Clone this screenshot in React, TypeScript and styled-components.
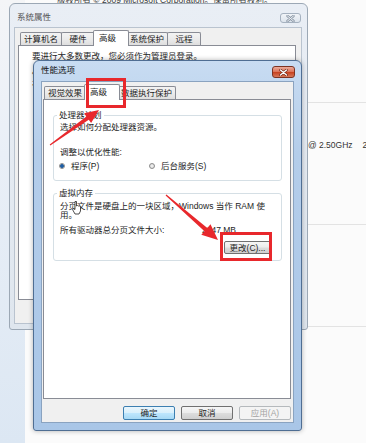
import React from 'react';
import styled, { createGlobalStyle, css } from 'styled-components';

const FONT = `"Liberation Sans", "Noto Sans CJK SC", sans-serif`;

const GlobalStyle = createGlobalStyle`
  html, body { margin: 0; padding: 0; background: #fafafa; }
  body { width: 366px; height: 443px; overflow: hidden; font-family: ${FONT}; }
  * { box-sizing: border-box; }
`;

const Desktop = styled.div`
  position: relative;
  width: 366px;
  height: 443px;
  overflow: hidden;
  display: flex;
  background: #fbfbfb;
  font-family: ${FONT};
  color: #1e1e1e;
`;

const NavPane = styled.div`
  width: 25px;
  flex: none;
  background: linear-gradient(to bottom, #f4f5f7 0%, #e9eff7 35%, #dce7f3 100%);
`;

const MainPane = styled.div`
  flex: 1;
  display: flex;
  flex-direction: column;
  background: #fbfbfb;
`;

const Copyright = styled.div`
  margin-top: -5px;
  padding-left: 32px;
  font-size: 8.5px;
  line-height: 10px;
  color: #3a3a3a;
  white-space: nowrap;
`;

const InfoSection = styled.div<{ $h: number }>`
  height: ${(p) => p.$h}px;
  flex: none;
  border-bottom: 1px solid #e3e3e3;
  display: flex;
  flex-direction: column;
`;

const InfoRow = styled.div<{ $top: number; $left: number }>`
  margin-top: ${(p) => p.$top}px;
  padding-left: ${(p) => p.$left}px;
  display: flex;
  gap: 10px;
  font-size: 8.5px;
  line-height: 10px;
  color: #333;
  white-space: nowrap;
`;

const WindowFrame = styled.div<{ $x: number; $y: number; $w: number; $h: number; $active?: boolean }>`
  position: absolute;
  left: ${(p) => p.$x}px;
  top: ${(p) => p.$y}px;
  width: ${(p) => p.$w}px;
  height: ${(p) => p.$h}px;
  display: flex;
  flex-direction: column;
  border-radius: 6px 6px 3px 3px;
  ${(p) =>
    p.$active
      ? css`
          border: 1px solid #4f6e93;
          background: linear-gradient(to bottom, #c8dcf2 0%, #b4cdea 25%, #a9c6e7 100%);
          padding: 0 7px 7px 7px;
          box-shadow: 0 0 5px rgba(0, 0, 0, 0.3);
        `
      : css`
          border: 1px solid #9ca8b5;
          background: linear-gradient(to bottom, #e9eef5 0%, #dfe6ee 100%);
          padding: 0 5px 5px 4px;
        `}
`;

const TitleBar = styled.div<{ $h: number }>`
  height: ${(p) => p.$h}px;
  flex: none;
  display: flex;
  align-items: flex-start;
  justify-content: space-between;
`;

const TitleText = styled.span<{ $active?: boolean; $top: number; $left: number }>`
  margin-top: ${(p) => p.$top}px;
  margin-left: ${(p) => p.$left}px;
  font-size: 8.5px;
  line-height: 10px;
  color: ${(p) => (p.$active ? '#111' : '#555')};
`;

const CloseButton = styled.div<{ $active?: boolean; $top: number; $right: number }>`
  margin-top: ${(p) => p.$top}px;
  margin-right: ${(p) => p.$right}px;
  border-radius: 3px;
  display: flex;
  align-items: center;
  justify-content: center;
  ${(p) =>
    p.$active
      ? css`
          width: 23px;
          height: 12px;
          border: 1px solid #7d3322;
          background: linear-gradient(to bottom, #eaab9b 0%, #dc7257 48%, #c6401d 52%, #d6785a 100%);
        `
      : css`
          width: 21px;
          height: 10px;
          border: 1px solid #a5b1bf;
          background: linear-gradient(to bottom, #f1f4f8 0%, #dde4ec 100%);
        `}
`;

const Client = styled.div<{ $active?: boolean; $pad: string }>`
  flex: 1;
  display: flex;
  flex-direction: column;
  background: #f0f0f0;
  border: 1px solid ${(p) => (p.$active ? '#8aa3c0' : '#b9c3cf')};
  padding: ${(p) => p.$pad};
  min-height: 0;
`;

const TabStrip = styled.div<{ $indent: number }>`
  height: 15px;
  flex: none;
  display: flex;
  align-items: flex-end;
  padding-left: ${(p) => p.$indent}px;
  position: relative;
  z-index: 1;
`;

const Tab = styled.div<{ $selected?: boolean }>`
  font-size: 8.5px;
  line-height: 10px;
  white-space: nowrap;
  display: flex;
  align-items: center;
  justify-content: center;
  border: 1px solid #898c95;
  border-bottom: none;
  border-radius: 2px 2px 0 0;
  ${(p) =>
    p.$selected
      ? css`
          height: 16px;
          margin: 0 -2px -1px -2px;
          padding: 0 12px 2px 5px;
          background: #fff;
          position: relative;
          z-index: 2;
        `
      : css`
          height: 13px;
          min-width: 34px;
          margin-left: -1px;
          padding: 0 3px;
          background: linear-gradient(to bottom, #f3f3f3 0%, #ebebeb 50%, #dedede 100%);
        `}
`;

const TabPanel = styled.div<{ $pad: string }>`
  flex: 1;
  min-height: 0;
  background: #fff;
  border: 1px solid #898c95;
  padding: ${(p) => p.$pad};
  display: flex;
  flex-direction: column;
  overflow: hidden;
`;

const ButtonRow = styled.div<{ $top: number; $bottom: number; $right?: number }>`
  flex: none;
  display: flex;
  justify-content: flex-end;
  gap: 6px;
  margin-top: ${(p) => p.$top}px;
  margin-bottom: ${(p) => p.$bottom}px;
  margin-right: ${(p) => p.$right ?? 0}px;
`;

type Variant = 'default' | 'normal' | 'disabled';

const WinButton = styled.div<{ $variant?: Variant; $w: number; $h?: number }>`
  width: ${(p) => p.$w}px;
  height: ${(p) => p.$h ?? 14}px;
  flex: none;
  display: flex;
  align-items: center;
  justify-content: center;
  font-size: 8.5px;
  line-height: 10px;
  border-radius: 2px;
  white-space: nowrap;
  color: #1e1e1e;
  border: 1px solid #707070;
  background: linear-gradient(to bottom, #f6f6f6 0%, #ececec 48%, #dddddd 52%, #cfcfcf 100%);
  ${(p) =>
    p.$variant === 'default' &&
    css`
      border-color: #3c7fb1;
      background: linear-gradient(to bottom, #eaf6fd 0%, #d9f0fc 48%, #bee6fd 52%, #a7d9f5 100%);
    `}
  ${(p) =>
    p.$variant === 'disabled' &&
    css`
      border-color: #b5b9bc;
      background: #f4f4f4;
      color: #a3a3a3;
    `}
`;

const GroupBox = styled.fieldset<{ $top: number; $bottom: number }>`
  margin: ${(p) => p.$top}px 8px 0 9px;
  padding: 0 6px ${(p) => p.$bottom}px 6px;
  border: 1px solid #d5dfe5;
  border-radius: 3px;
  min-width: 0;
  flex: none;
`;

const GroupLegend = styled.legend`
  padding: 0 2px;
  margin-left: -3px;
  font-size: 8.5px;
  line-height: 10px;
  color: #1e1e1e;
`;

const Text = styled.div<{ $top?: number; $lh?: number }>`
  margin-top: ${(p) => p.$top ?? 0}px;
  font-size: 8.5px;
  line-height: ${(p) => p.$lh ?? 10}px;
  color: #1e1e1e;
  white-space: nowrap;
`;

const RadioRow = styled.div`
  margin-top: 4px;
  display: grid;
  grid-template-columns: 90px auto;
  height: 10px;
`;

const RadioItem = styled.label`
  display: flex;
  align-items: center;
  gap: 6px;
  font-size: 8.5px;
  line-height: 10px;
  margin-left: -1px;
`;

const RadioDot = styled.span<{ $checked?: boolean }>`
  width: 6px;
  height: 6px;
  border-radius: 50%;
  flex: none;
  border: 1px solid #8b8b8b;
  background: ${(p) =>
    p.$checked
      ? 'radial-gradient(circle, #1f5fa6 0 1.6px, #9cc3ea 2px, #e9f1fa 100%)'
      : 'radial-gradient(circle, #f4f4f4 0, #d6d6d6 100%)'};
`;

const ValueRow = styled.div`
  margin-top: 5px;
  display: grid;
  grid-template-columns: 142px auto;
  font-size: 8.5px;
  line-height: 10px;
  white-space: nowrap;
`;

const ChangeRow = styled.div`
  margin-top: 6px;
  display: flex;
  justify-content: flex-end;
  padding-right: 4px;
`;

const Overlay = styled.svg`
  position: absolute;
  left: 0;
  top: 0;
  width: 366px;
  height: 443px;
  pointer-events: none;
  z-index: 10;
`;

type Pt = [number, number];

function arrowPoints(tail: Pt, tip: Pt, headLen: number, headHalf: number, tailHalf: number, neckHalf: number): string {
  const dx = tip[0] - tail[0];
  const dy = tip[1] - tail[1];
  const len = Math.hypot(dx, dy);
  const ux = dx / len;
  const uy = dy / len;
  const nx = -uy;
  const ny = ux;
  const bx = tip[0] - ux * headLen;
  const by = tip[1] - uy * headLen;
  const pts: Pt[] = [
    [tail[0] + nx * tailHalf, tail[1] + ny * tailHalf],
    [bx + nx * neckHalf, by + ny * neckHalf],
    [bx + nx * headHalf, by + ny * headHalf],
    tip,
    [bx - nx * headHalf, by - ny * headHalf],
    [bx - nx * neckHalf, by - ny * neckHalf],
    [tail[0] - nx * tailHalf, tail[1] - ny * tailHalf],
  ];
  return pts.map((p) => `${p[0].toFixed(1)},${p[1].toFixed(1)}`).join(' ');
}

const CloseGlyph: React.FC<{ active?: boolean }> = ({ active }) => (
  <svg width="9" height="7" viewBox="0 0 9 7">
    {active ? (
      <>
        <path d="M1.5 1 L7.5 6 M7.5 1 L1.5 6" stroke="#6b2414" strokeWidth="2.6" strokeLinecap="round" />
        <path d="M1.5 1 L7.5 6 M7.5 1 L1.5 6" stroke="#fff" strokeWidth="1.4" strokeLinecap="round" />
      </>
    ) : (
      <>
        <path d="M1.5 1 L7.5 6 M7.5 1 L1.5 6" stroke="#8b97a6" strokeWidth="2.4" strokeLinecap="round" />
        <path d="M1.5 1 L7.5 6 M7.5 1 L1.5 6" stroke="#eef2f6" strokeWidth="1" strokeLinecap="round" />
      </>
    )}
  </svg>
);

const RED = '#e8282c';

export default function App() {
  return (
    <>
      <GlobalStyle />
      <Desktop>
        <NavPane />
        <MainPane>
          <Copyright>版权所有 © 2009 Microsoft Corporation。保留所有权利。</Copyright>
          <InfoSection $h={98} />
          <InfoSection $h={122}>
            <InfoRow $top={37} $left={283}>
              <span>@ 2.50GHz</span>
              <span>2.50 GHz</span>
            </InfoRow>
          </InfoSection>
          <InfoSection $h={102} />
        </MainPane>

        {/* 系统属性 (inactive, behind) */}
        <WindowFrame $x={9} $y={3} $w={299} $h={327}>
          <TitleBar $h={23}>
            <TitleText $top={8} $left={3}>系统属性</TitleText>
            <CloseButton $top={9} $right={1}>
              <CloseGlyph />
            </CloseButton>
          </TitleBar>
          <Client $pad="2px 5px 0 3px">
            <TabStrip $indent={3}>
              <Tab>计算机名</Tab>
              <Tab>硬件</Tab>
              <Tab $selected>高级</Tab>
              <Tab>系统保护</Tab>
              <Tab>远程</Tab>
            </TabStrip>
            <TabPanel $pad="5px 8px 0 13px">
              <Text>要进行大多数更改，您必须作为管理员登录。</Text>
              <Text $top={8}>性能</Text>
              <Text>视觉效果，处理器计划，内存使用，以及虚拟内存</Text>
            </TabPanel>
            <ButtonRow $top={6} $bottom={3}>
              <WinButton $w={52} $variant="default">确定</WinButton>
              <WinButton $w={52}>取消</WinButton>
              <WinButton $w={52} $variant="disabled">应用(A)</WinButton>
            </ButtonRow>
          </Client>
        </WindowFrame>

        {/* 性能选项 (active) */}
        <WindowFrame $x={33} $y={60} $w={269} $h={371} $active>
          <TitleBar $h={20}>
            <TitleText $active $top={4} $left={0}>性能选项</TitleText>
            <CloseButton $active $top={5} $right={-1}>
              <CloseGlyph active />
            </CloseButton>
          </TitleBar>
          <Client $active $pad="2px 2px 1px 1px">
            <TabStrip $indent={2}>
              <Tab>视觉效果</Tab>
              <Tab $selected>高级</Tab>
              <Tab>数据执行保护</Tab>
            </TabStrip>
            <TabPanel $pad="10px 0 0 0">
              <GroupBox $top={0} $bottom={9}>
                <GroupLegend>处理器计划</GroupLegend>
                <Text $top={2}>选择如何分配处理器资源。</Text>
                <Text $top={15}>调整以优化性能:</Text>
                <RadioRow>
                  <RadioItem>
                    <RadioDot $checked />
                    程序(P)
                  </RadioItem>
                  <RadioItem>
                    <RadioDot />
                    后台服务(S)
                  </RadioItem>
                </RadioRow>
              </GroupBox>
              <GroupBox $top={7} $bottom={6}>
                <GroupLegend>虚拟内存</GroupLegend>
                <Text $top={4} $lh={9}>
                  分页文件是硬盘上的一块区域，Windows 当作 RAM 使
                  <br />
                  用。
                </Text>
                <ValueRow>
                  <span>所有驱动器总分页文件大小:</span>
                  <span>2047 MB</span>
                </ValueRow>
                <ChangeRow>
                  <WinButton $w={47} $h={13}>更改(C)...</WinButton>
                </ChangeRow>
              </GroupBox>
            </TabPanel>
            <ButtonRow $top={7} $bottom={1} $right={0}>
              <WinButton $w={52} $variant="default">确定</WinButton>
              <WinButton $w={52}>取消</WinButton>
              <WinButton $w={52} $variant="disabled">应用(A)</WinButton>
            </ButtonRow>
          </Client>
        </WindowFrame>

        <Overlay viewBox="0 0 366 443">
          <rect x="87.5" y="79.5" width="37" height="27" fill="none" stroke={RED} strokeWidth="3" />
          <rect x="221.5" y="233.5" width="49" height="26" fill="none" stroke={RED} strokeWidth="3" />
          <polygon points={arrowPoints([50, 145], [99, 110], 14, 6, 0.6, 2)} fill={RED} />
          <polygon points={arrowPoints([166, 195], [218, 240], 16, 7, 0.6, 2.2)} fill={RED} />
          <g transform="translate(72 201)">
            <path
              d="M3 0.5 L4.5 0.5 L4.5 5 L5.5 4.5 L6.5 5 L7.5 5 L8.5 5.5 L8.5 10 L7 13 L3 13 L0.5 8.5 L1 7.5 L3 8.5 Z"
              fill="#fff"
              stroke="#222"
              strokeWidth="0.8"
            />
          </g>
        </Overlay>
      </Desktop>
    </>
  );
}
